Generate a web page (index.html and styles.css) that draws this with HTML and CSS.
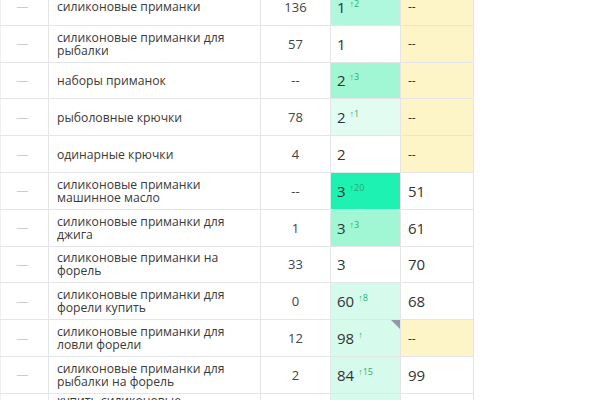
FILE: index.html
```html
<!DOCTYPE html>
<html>
<head>
<meta charset="utf-8">
<link rel="stylesheet" href="styles.css">
</head>
<body>
<div class="wrap">
<table class="kw">
<colgroup><col class="c1"><col class="c2"><col class="c3"><col class="c4"><col class="c5"></colgroup>
<tbody>
<tr><td class="d">—</td><td class="k">силиконовые приманки</td><td class="n">136</td><td class="p g2">1<sup>↑2</sup></td><td class="v y">--</td></tr>
<tr><td class="d">—</td><td class="k">силиконовые приманки для рыбалки</td><td class="n">57</td><td class="p">1</td><td class="v y">--</td></tr>
<tr><td class="d">—</td><td class="k">наборы приманок</td><td class="n">--</td><td class="p g3">2<sup>↑3</sup></td><td class="v y">--</td></tr>
<tr><td class="d">—</td><td class="k">рыболовные крючки</td><td class="n">78</td><td class="p g1">2<sup>↑1</sup></td><td class="v y">--</td></tr>
<tr><td class="d">—</td><td class="k">одинарные крючки</td><td class="n">4</td><td class="p">2</td><td class="v y">--</td></tr>
<tr><td class="d">—</td><td class="k">силиконовые приманки машинное масло</td><td class="n">--</td><td class="p g4">3<sup>↑20</sup></td><td class="v">51</td></tr>
<tr><td class="d">—</td><td class="k">силиконовые приманки для джига</td><td class="n">1</td><td class="p g3">3<sup>↑3</sup></td><td class="v">61</td></tr>
<tr><td class="d">—</td><td class="k">силиконовые приманки на форель</td><td class="n">33</td><td class="p">3</td><td class="v">70</td></tr>
<tr><td class="d">—</td><td class="k">силиконовые приманки для форели купить</td><td class="n">0</td><td class="p g5">60<sup>↑8</sup></td><td class="v">68</td></tr>
<tr><td class="d">—</td><td class="k">силиконовые приманки для ловли форели</td><td class="n">12</td><td class="p g5 corner">98<sup>↑</sup></td><td class="v y">--</td></tr>
<tr><td class="d">—</td><td class="k">силиконовые приманки для рыбалки на форель</td><td class="n">2</td><td class="p g5">84<sup>↑15</sup></td><td class="v">99</td></tr>
<tr class="last"><td class="d">—</td><td class="k">купить силиконовые<br>приманки для форели</td><td class="n">5</td><td class="p g5">87</td><td class="v">92</td></tr>
</tbody>
</table>
</div>
</body>
</html>
```
FILE: styles.css
```css
html, body { margin: 0; padding: 0; background: #fff; }
body { font-family: "Open Sans", "Noto Sans", sans-serif; color: #333; overflow: hidden; height: 400px; }
.wrap { margin-top: -12px; }
.kw { border-collapse: collapse; table-layout: fixed; width: 473px; }
.c1 { width: 48px; }
.c2 { width: 212px; }
.c3 { width: 70px; }
.c4 { width: 70px; }
.c5 { width: 73px; }
.kw td { height: 35.8px; border: 1px solid #e3e5e8; padding: 0; vertical-align: middle; }
.kw td.d { color: #c9cbce; text-align: center; font-size: 12px; padding-right: 4px; border-left: 1px solid #eef0f2; }
.kw td.k { font-size: 12.2px; line-height: 13px; padding: 0 8px; color: #3a3a3a; }
.kw .last td.k { vertical-align: top; padding-top: 0; }
.kw td.n { text-align: center; font-size: 13px; color: #444; }
.kw td.p { font-size: 15px; padding-left: 6px; color: #333; position: relative; }
.kw td.v { font-size: 15px; padding-left: 7px; color: #333; }
.kw td.v.y { font-size: 12px; }
.p sup { font-size: 9px; color: #22b573; vertical-align: 6px; margin-left: 4px; line-height: 0; }
.g1 { background: #e3fcf2; }
.g2 { background: #b0f8dd; }
.g3 { background: #a1f7d4; }
.g4 { background: #1df2b2; }
.g4 sup { color: #2aa86e; }
.g5 { background: #d6fbed; }
.y { background: #fdf4c8; }
.corner::after { content: ""; position: absolute; top: 0; right: 0; border-style: solid; border-width: 0 9px 9px 0; border-color: transparent #8e9aa6 transparent transparent; }
```
